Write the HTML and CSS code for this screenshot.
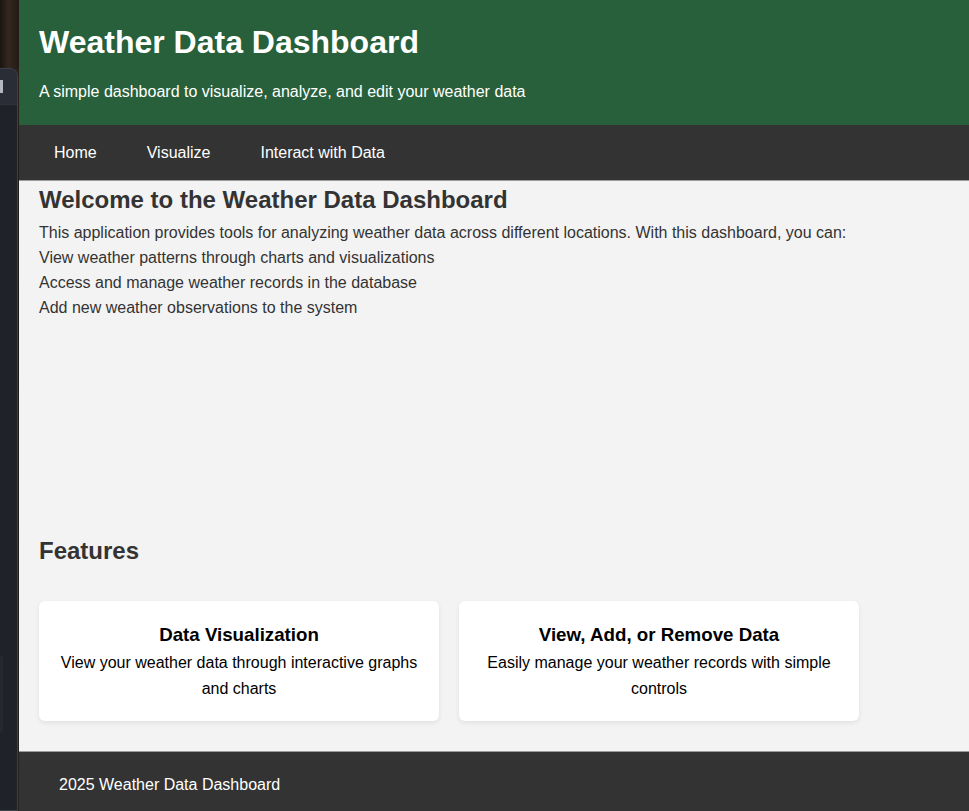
FILE: index.html
```html
<!DOCTYPE html>
<html lang="en">
<head>
<meta charset="utf-8">
<title>Weather Data Dashboard</title>
<link rel="stylesheet" href="styles.css">
</head>
<body>
<div class="desk">
  <div class="wallpaper"></div>
  <div class="win">
    <div class="win-bar"><span class="win-tab"></span></div>
    <div class="win-body"><span class="win-panel"></span></div>
  </div>
</div>
<div class="page">
  <header class="site-header">
    <h1>Weather Data Dashboard</h1>
    <p>A simple dashboard to visualize, analyze, and edit your weather data</p>
  </header>
  <nav class="site-nav">
    <a href="#">Home</a>
    <a href="#">Visualize</a>
    <a href="#">Interact with Data</a>
  </nav>
  <main class="content">
    <h2 class="section-title welcome-title">Welcome to the Weather Data Dashboard</h2>
    <p class="intro">This application provides tools for analyzing weather data across different locations. With this dashboard, you can:</p>
    <ul class="intro-list">
      <li>View weather patterns through charts and visualizations</li>
      <li>Access and manage weather records in the database</li>
      <li>Add new weather observations to the system</li>
    </ul>
    <div class="chart-space"></div>
    <h2 class="section-title features-title">Features</h2>
    <div class="cards">
      <div class="card">
        <h3>Data Visualization</h3>
        <p>View your weather data through interactive graphs and charts</p>
      </div>
      <div class="card">
        <h3>View, Add, or Remove Data</h3>
        <p>Easily manage your weather records with simple controls</p>
      </div>
    </div>
  </main>
  <footer class="site-footer">
    <p>2025 Weather Data Dashboard</p>
  </footer>
</div>
</body>
</html>
```
FILE: styles.css
```css
html, body {
  margin: 0;
  padding: 0;
  height: 811px;
  overflow: hidden;
}
body {
  display: flex;
  font-family: "Liberation Sans", Arial, sans-serif;
  background: #1f2228;
}
.desk {
  width: 19px;
  flex: none;
  display: flex;
  flex-direction: column;
  background: linear-gradient(180deg, #2b221b 0%, #1d1712 40%, #2a2119 100%);
}
.wallpaper {
  height: 68px;
  background: linear-gradient(90deg, #1a1410 0%, #33281f 45%, #221a14 100%);
}
.win {
  flex: 1;
  display: flex;
  flex-direction: column;
  margin-right: 1px;
  border-top-right-radius: 8px;
  border: 1px solid #3c4049;
  border-left: none;
  overflow: hidden;
  background: #1f2229;
}
.win-bar {
  height: 36px;
  background: #2a2d35;
  border-bottom: 1px solid #30333b;
  padding-top: 11px;
  box-sizing: border-box;
}
.win-tab {
  display: block;
  width: 3px;
  height: 13px;
  background: #b3b7c2;
}
.win-body {
  flex: 1;
  padding-top: 551px;
  background: #1f2229;
}
.win-panel {
  display: block;
  width: 3px;
  height: 76px;
  background: #252830;
}
.page {
  flex: 1;
  display: flex;
  flex-direction: column;
  background: #f3f3f3;
  min-width: 0;
}
.site-header {
  background: #27603a;
  color: #fff;
  padding: 24px 20px;
}
.site-header h1 {
  margin: 0;
  font-size: 32px;
  line-height: 37px;
  font-weight: bold;
}
.site-header p {
  margin: 22px 0 0;
  font-size: 16px;
  line-height: 18px;
}
.site-nav {
  background: #333;
  display: flex;
  gap: 20px;
  padding: 0 20px;
  border-bottom: 1px solid #9a9a9a;
}
.site-nav a {
  color: #fff;
  text-decoration: none;
  font-size: 16px;
  line-height: 19px;
  padding: 18px 15px;
}
.content {
  padding: 4px 20px 30px;
  color: #333;
}
.section-title {
  margin: 0;
  font-size: 24px;
  line-height: 29px;
  font-weight: bold;
  color: #333;
}
.welcome-title {
  margin-bottom: 6px;
}
.intro {
  margin: 0;
  font-size: 16px;
  line-height: 25px;
}
.intro-list {
  margin: 0;
  padding: 0;
  list-style: none;
  font-size: 16px;
  line-height: 25px;
}
.chart-space {
  height: 216px;
}
.features-title {
  margin-bottom: 36px;
}
.cards {
  display: flex;
  gap: 20px;
}
.card {
  width: 400px;
  box-sizing: border-box;
  background: #fff;
  border-radius: 6px;
  box-shadow: 0 2px 5px rgba(0, 0, 0, 0.08);
  padding: 19px 20px;
  text-align: center;
  color: #000;
}
.card h3 {
  margin: 0;
  font-size: 18.72px;
  line-height: 30px;
  font-weight: bold;
}
.card p {
  margin: 0;
  font-size: 16px;
  line-height: 26px;
}
.site-footer {
  background: #333;
  color: #fff;
  border-top: 1px solid #9a9a9a;
  padding: 24px 40px 17px;
}
.site-footer p {
  margin: 0;
  font-size: 16px;
  line-height: 18px;
}
```
